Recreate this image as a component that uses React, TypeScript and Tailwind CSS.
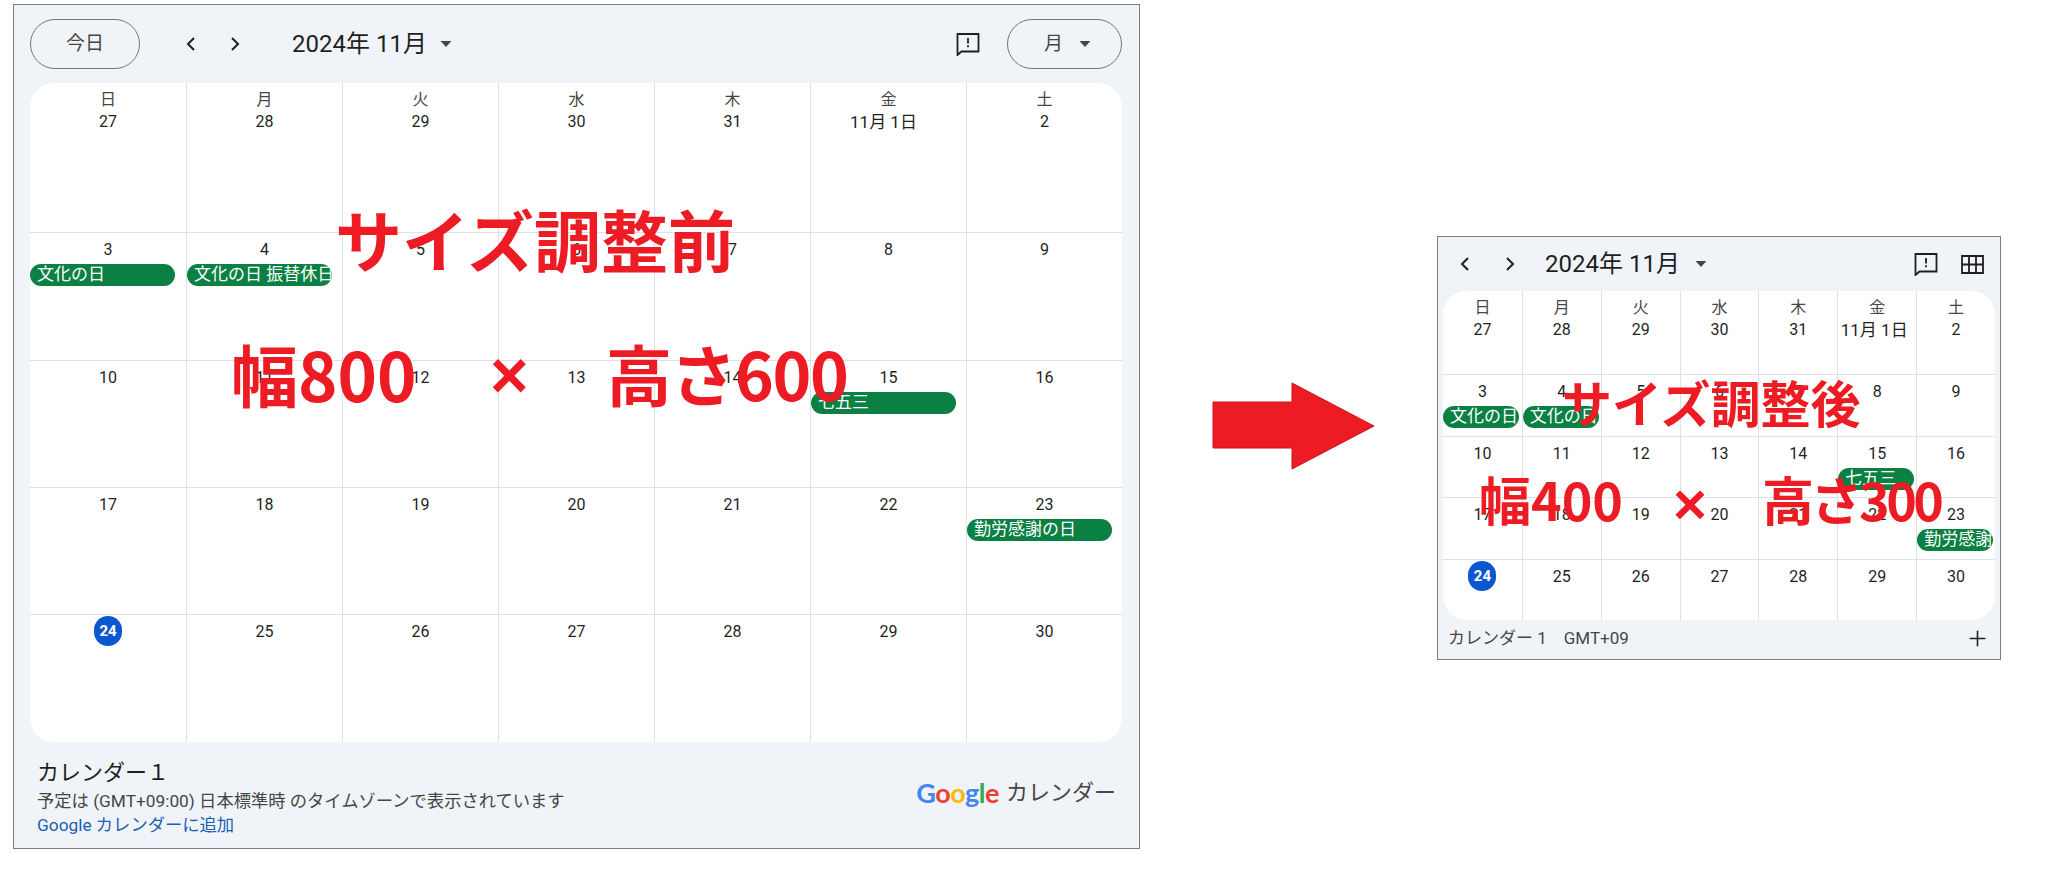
import React from "react";
import { Plus } from "lucide-react";

const FONT = "font-['Roboto','Noto_Sans_CJK_JP',sans-serif]";
const RED = "font-['Noto_Sans_CJK_JP',sans-serif] font-bold text-[#ed1c24] whitespace-pre leading-none";
const CROSS = "font-['Liberation_Sans',sans-serif] font-bold text-[#ed1c24] leading-none";

type Cell = { d: string; label?: string; event?: string; today?: boolean };

const labels = ["日", "月", "火", "水", "木", "金", "土"];
const cells: Cell[] = [
  ...["27", "28", "29", "30", "31", "11月 1日", "2"].map((d, i) => ({ d, label: labels[i] })),
  { d: "3", event: "文化の日" },
  { d: "4", event: "文化の日 振替休日" },
  ...["5", "6", "7", "8", "9"].map((d) => ({ d })),
  ...["10", "11", "12", "13", "14"].map((d) => ({ d })),
  { d: "15", event: "七五三" },
  { d: "16" },
  ...["17", "18", "19", "20", "21", "22"].map((d) => ({ d })),
  { d: "23", event: "勤労感謝の日" },
  { d: "24", today: true },
  ...["25", "26", "27", "28", "29", "30"].map((d) => ({ d })),
];

function Chevron({ left }: { left?: boolean }) {
  return (
    <svg width="12" height="16" viewBox="0 0 12 16" fill="none" stroke="#1f1f1f" strokeWidth="2">
      <path d={left ? "M9 2 3 8l6 6" : "M3 2l6 6-6 6"} />
    </svg>
  );
}

function Caret() {
  return (
    <svg width="12" height="6" viewBox="0 0 12 6" fill="#444746">
      <path d="M0.5 0h11L6 6z" />
    </svg>
  );
}

function Feedback() {
  return (
    <svg width="24" height="24" viewBox="0 0 24 24" fill="none">
      <path d="M1.5 2h21v17.5H5.5L1.5 23z" stroke="#1f1f1f" strokeWidth="1.8" strokeLinejoin="miter" />
      <path d="M12 6v5.5M12 13.2v2" stroke="#1f1f1f" strokeWidth="1.8" />
    </svg>
  );
}

function GridIcon() {
  return (
    <svg width="23" height="19" viewBox="0 0 23 19" fill="none" stroke="#1f1f1f" strokeWidth="1.8">
      <path d="M1 1h21v17H1zM8 1v17M15 1v17M1 9.5h21" />
    </svg>
  );
}

function Calendar({ small }: { small?: boolean }) {
  return (
    <div
      className={
        small
          ? "grid grid-cols-7 grid-rows-[83px_62px_61px_62px_61px] h-[329px] rounded-[24px] overflow-hidden bg-white"
          : "grid grid-cols-7 grid-rows-[149px_128px_127px_127px_128px] h-[659px] rounded-[24px] overflow-hidden bg-white"
      }
    >
      {cells.map((c, i) => (
        <div
          key={i}
          className={`flex flex-col items-start min-w-0 overflow-hidden border-[#dde1e6] ${i % 7 ? "border-l" : ""} ${i >= 7 ? "border-t" : ""}`}
        >
          {c.label && (
            <div className="w-full pt-[6px] text-center text-[16px] leading-[22px] text-[#444746]">{c.label}</div>
          )}
          {c.today ? (
            <div className="self-center mt-[1px] w-[28px] h-[30px] rounded-full bg-[#0b57d0] text-white font-bold text-[15px] leading-[30px] text-center">
              24
            </div>
          ) : (
            <div
              className={`w-full text-center leading-[22px] text-[#1f1f1f] whitespace-nowrap ${c.label ? "" : "pt-[6px]"} ${c.d.length > 2 ? (small ? "text-[17px] pr-[6px]" : "text-[17px] pr-[10px]") : "text-[16px]"}`}
            >
              {c.d}
            </div>
          )}
          {c.event && (
            <div
              className={`mt-[3px] h-[22px] rounded-[11px] bg-[#0b8043] text-white text-[17px] leading-[21px] pl-[7px] overflow-hidden whitespace-nowrap ${small ? "w-[76px]" : "w-[145px]"}`}
            >
              {c.event}
            </div>
          )}
        </div>
      ))}
    </div>
  );
}

function GoogleWord() {
  return (
    <span className="font-['Lato',sans-serif] font-bold text-[27px] leading-none tracking-[-0.5px]">
      <span className="text-[#4285f4]">G</span>
      <span className="text-[#ea4335]">o</span>
      <span className="text-[#fbbc05]">o</span>
      <span className="text-[#4285f4]">g</span>
      <span className="text-[#34a853]">l</span>
      <span className="text-[#ea4335]">e</span>
    </span>
  );
}

export default function App() {
  return (
    <div className={`relative w-[2048px] h-[876px] overflow-hidden bg-white flex items-start ${FONT}`}>
      {/* large widget */}
      <div className="ml-[13px] mt-[4px] w-[1127px] h-[845px] shrink-0 border border-[#7d7d7d] bg-[#f0f4f9] pl-[16px] pr-[17px] flex flex-col">
        <div className="h-[78px] shrink-0 flex items-center">
          <div className="w-[110px] h-[50px] rounded-full border border-[#747775] flex items-center justify-center text-[19px] text-[#444746]">
            今日
          </div>
          <div className="ml-[45px]"><Chevron left /></div>
          <div className="ml-[32px]"><Chevron /></div>
          <div className="ml-[51px] text-[24px] leading-none text-[#1f1f1f] whitespace-pre">2024年 11月</div>
          <div className="ml-[13px]"><Caret /></div>
          <div className="ml-auto"><Feedback /></div>
          <div className="ml-[27px] w-[115px] h-[50px] rounded-full border border-[#747775] flex items-center justify-center gap-[16px] text-[19px] text-[#444746]">
            <span className="pl-[6px]">月</span>
            <Caret />
          </div>
        </div>
        <Calendar />
        <div className="flex items-start justify-between pl-[7px] pr-[6px]">
          <div className="pt-[16px]">
            <div className="text-[22px] leading-[30px] text-[#1f1f1f]">カレンダー１</div>
            <div className="text-[17.3px] leading-[23px] mt-[2px] text-[#444746] whitespace-pre">予定は (GMT+09:00) 日本標準時 のタイムゾーンで表示されています</div>
            <div className="text-[17.3px] leading-[24px] text-[#1a5fb4]">Google カレンダーに追加</div>
          </div>
          <div className="pt-[37px] flex items-center gap-[7px]">
            <GoogleWord />
            <span className="text-[22px] leading-none text-[#444746]">カレンダー</span>
          </div>
        </div>
      </div>

      {/* arrow */}
      <svg className="ml-[72px] mt-[382px] shrink-0" width="164" height="88" viewBox="0 0 164 88">
        <path d="M1 20h79V1l82 43-82 43V66H1z" fill="#ed1c24" stroke="#c8141c" strokeWidth="1" strokeLinejoin="round" />
      </svg>

      {/* small widget */}
      <div className="ml-[61px] mt-[236px] w-[564px] h-[424px] shrink-0 border border-[#7d7d7d] bg-[#f0f4f9] px-[5px] flex flex-col">
        <div className="h-[54px] shrink-0 flex items-center">
          <div className="ml-[16px]"><Chevron left /></div>
          <div className="ml-[33px]"><Chevron /></div>
          <div className="ml-[29px] text-[24px] leading-none text-[#1f1f1f] whitespace-pre">2024年 11月</div>
          <div className="ml-[15px]"><Caret /></div>
          <div className="ml-auto"><Feedback /></div>
          <div className="ml-[23px] mr-[11px]"><GridIcon /></div>
        </div>
        <Calendar small />
        <div className="flex-1 flex items-center justify-between pl-[5px] pr-[5px] pb-[2px]">
          <div className="flex gap-[17px] text-[17px] leading-none text-[#444746] whitespace-pre">
            <span>カレンダー 1</span>
            <span>GMT+09</span>
          </div>
          <Plus size={25} strokeWidth={1.5} color="#1f1f1f" />
        </div>
      </div>

      {/* annotations laid over the calendars */}
      <div className={`absolute left-[335px] top-[204px] text-[67px] ${RED}`}>サイズ調整前</div>
      <div className={`absolute left-[231px] top-[339px] text-[67px] ${RED}`}>幅800</div>
      <div className={`absolute left-[490px] top-[342px] text-[66px] ${CROSS}`}>×</div>
      <div className={`absolute left-[606px] top-[339px] text-[66px] tracking-[-1.5px] ${RED}`}>高さ600</div>
      <div className={`absolute left-[1562px] top-[376px] text-[50px] ${RED}`}>サイズ調整後</div>
      <div className={`absolute left-[1479px] top-[473px] text-[52px] ${RED}`}>幅400</div>
      <div className={`absolute left-[1673px] top-[475px] text-[58px] ${CROSS}`}>×</div>
      <div className={`absolute left-[1762px] top-[473px] text-[52px] tracking-[-3.5px] ${RED}`}>高さ300</div>
    </div>
  );
}
